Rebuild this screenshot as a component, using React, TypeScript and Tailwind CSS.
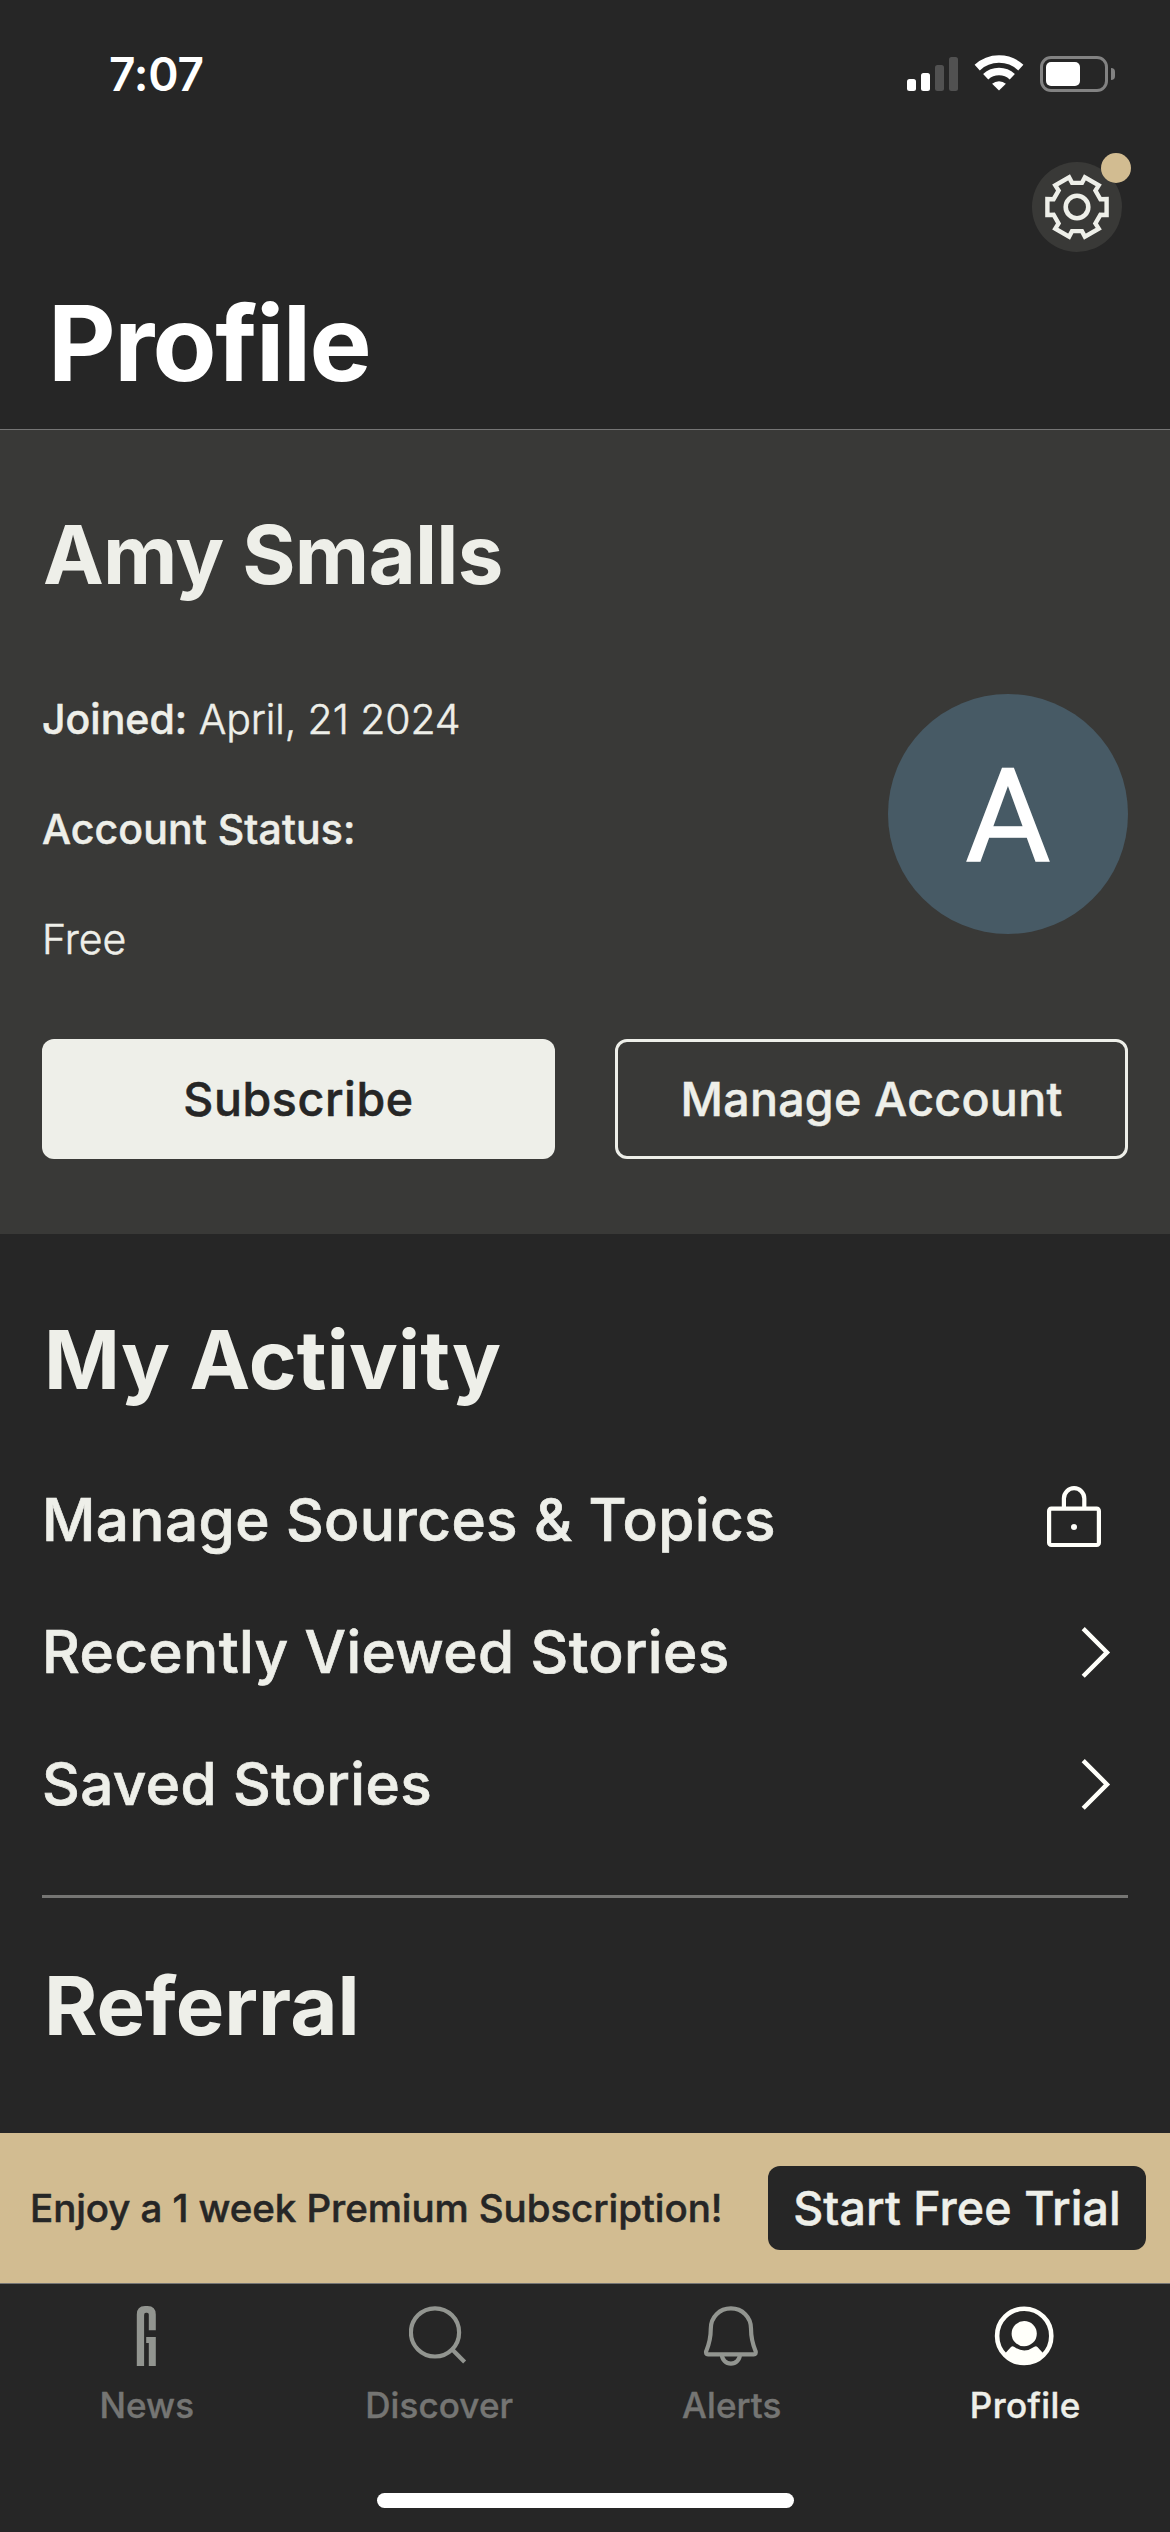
import React from "react";

function SignalBars() {
  return (
    <div className="flex h-[34px] items-end gap-[5px]">
      <div className="h-[12px] w-[9px] rounded-[2.5px] bg-white" />
      <div className="h-[18px] w-[9px] rounded-[2.5px] bg-white" />
      <div className="h-[26px] w-[9px] rounded-[2.5px] bg-[#515151]" />
      <div className="h-[34px] w-[9px] rounded-[2.5px] bg-[#515151]" />
    </div>
  );
}

function WifiIcon() {
  return (
    <svg width="48" height="36" viewBox="-24 -36 48 36" fill="none" className="-mt-[2px] overflow-visible">
      <path d="M-21.8 -23.4A32 32 0 0 1 21.8 -23.4" stroke="#fff" strokeWidth="7.6" />
      <path d="M-13.3 -14.3A19.5 19.5 0 0 1 13.3 -14.3" stroke="#fff" strokeWidth="7.6" />
      <path d="M0 -0.5L-6.9 -7.3A10.7 10.7 0 0 1 6.9 -7.3Z" fill="#fff" />
    </svg>
  );
}

function Battery() {
  return (
    <div className="flex items-center gap-[3px]">
      <div className="h-[36px] w-[68px] rounded-[11px] border-[3px] border-[#828282] p-[3px]">
        <div className="h-[24px] w-[34px] rounded-[5px] bg-white" />
      </div>
      <div className="h-[12px] w-[4px] rounded-r-full bg-[#828282]" />
    </div>
  );
}

const gearPoints = [0, 1, 2, 3, 4, 5]
  .flatMap((k) => {
    const a = (k * Math.PI) / 3;
    return [
      [29.6, -8],
      [29.6, 8],
      [23.4, 7.8],
      [18.4, 16.4],
    ].map(([x, y]) => `${(x * Math.cos(a) - y * Math.sin(a)).toFixed(2)},${(x * Math.sin(a) + y * Math.cos(a)).toFixed(2)}`);
  })
  .join(" ");

function GearIcon() {
  return (
    <svg width="66" height="66" viewBox="-33 -33 66 66" fill="none" stroke="#eeefe9">
      <polygon points={gearPoints} strokeWidth="4.4" />
      <circle r="11.3" strokeWidth="4.6" />
    </svg>
  );
}

function LockIcon() {
  return (
    <svg width="81" height="72" viewBox="0 0 81 72" fill="none" stroke="#fffffa" strokeWidth="4.2">
      <rect x="2.1" y="24.7" width="49.8" height="36.3" rx="2.2" />
      <path d="M16.9 24V14.4a10.2 10.2 0 0 1 20.4 0V24" />
      <circle cx="27" cy="43" r="3" fill="#fffffa" stroke="none" />
    </svg>
  );
}

function ChevronIcon() {
  return (
    <svg width="81" height="72" viewBox="0 0 81 72" fill="none" stroke="#fffffa" strokeWidth="4.4">
      <path d="M36.2 12.6L60 36.4L36.2 60.2" />
    </svg>
  );
}

function NewsIcon() {
  return (
    <svg width="60" height="60" viewBox="0 0 60 60" fill="#929590">
      <path d="M20.8 60V8.5Q20.8 0 29 0H31.6Q39.8 0 39.8 8.5V24.2H32.8V8.6Q32.8 6.8 31 6.8H30Q28.1 6.8 28.1 9V60Z" />
      <path d="M30.2 31H39.8V60H32.8V37H30.2Z" />
    </svg>
  );
}

function SearchIcon() {
  return (
    <svg width="60" height="60" viewBox="0 0 60 60" fill="none" stroke="#929590" strokeWidth="4.2">
      <circle cx="26" cy="26.4" r="24.1" />
      <path d="M43 43.2L55.6 56" />
    </svg>
  );
}

function BellIcon() {
  return (
    <svg width="60" height="60" viewBox="0 0 60 60" fill="none" stroke="#929590" strokeWidth="4.2">
      <path d="M29.9 2.4C18.5 2.4 9.8 11 9.8 22.5C9.8 33 8 38.5 5.2 45.2C4.4 47 5.3 48.4 7 48.4H52.8C54.5 48.4 55.4 47 54.6 45.2C51.8 38.5 50 33 50 22.5C50 11 41.3 2.4 29.9 2.4Z" />
      <path d="M20.9 48.6a9 9 0 0 0 18 0" />
    </svg>
  );
}

function ProfileIcon() {
  return (
    <svg width="60" height="60" viewBox="0 0 60 60" fill="#fffffa">
      <circle cx="30.2" cy="29.9" r="27.1" fill="none" stroke="#fffffa" strokeWidth="4.6" />
      <circle cx="30.2" cy="27.7" r="12.6" />
      <path d="M11 47.5L17 41Q18.4 39.5 20 40.8Q30.2 48.2 40.4 40.8Q42 39.5 43.4 41L49.4 47.5A26.5 26.5 0 0 1 11 47.5Z" />
    </svg>
  );
}

function ActivityRow({ label, icon }: { label: string; icon: React.ReactNode }) {
  return (
    <div className="flex h-[132px] items-center justify-between">
      <span className="text-[58.5px] font-medium tracking-[0.38px] whitespace-nowrap [-webkit-text-stroke:0.7px]">
        {label}
      </span>
      {icon}
    </div>
  );
}

function Tab({ label, icon, active = false }: { label: string; icon: React.ReactNode; active?: boolean }) {
  return (
    <div className="flex flex-1 flex-col items-center">
      {icon}
      <span
        className={
          active
            ? "mt-[18px] pl-[3px] text-[35px] leading-[42px] font-medium tracking-[0.4px] text-[#eeefe9] [-webkit-text-stroke:0.4px]"
            : "mt-[18px] pl-px text-[35px] leading-[42px] font-medium tracking-[0.1px] text-[#757573] [-webkit-text-stroke:0.4px]"
        }
      >
        {label}
      </span>
    </div>
  );
}

export default function App() {
  return (
    <div className="flex h-[2532px] w-[1170px] flex-col overflow-hidden bg-[#262626] font-['Inter',sans-serif] text-[#eeefe9]">
      <header className="flex h-[430px] shrink-0 flex-col border-b border-[#757575]">
        <div className="flex h-[148px] items-center justify-between pr-[55px] pl-[109px]">
          <span className="text-[46px] font-semibold tracking-[-0.2px] text-white">7:07</span>
          <div className="flex items-center gap-[17px]">
            <SignalBars />
            <WifiIcon />
            <Battery />
          </div>
        </div>
        <div className="mt-[14px] flex justify-end pr-12">
          <div className="relative flex h-[90px] w-[90px] items-center justify-center rounded-full bg-[#393937]">
            <GearIcon />
            <div className="absolute -top-[9px] -right-[9px] h-[30px] w-[30px] rounded-full bg-[#d2bc91]" />
          </div>
        </div>
        <h1 className="mt-[31px] pl-12 text-[104.5px] leading-[120px] font-bold tracking-[-1.55px] text-white">
          Profile
        </h1>
      </header>

      <section className="flex h-[804px] shrink-0 flex-col bg-[#393937] px-[42px] pt-[75px]">
        <h2 className="pl-px text-[81.5px] leading-[100px] font-bold tracking-[-0.75px]">Amy Smalls</h2>
        <div className="mt-[59px] flex justify-between">
          <div className="text-[41px] leading-[110px] font-light [-webkit-text-stroke:0.5px]">
            <p>
              <span className="font-medium">Joined:</span>
              <span className="tracking-[-0.1px]"> April, 21 2024</span>
            </p>
            <p className="font-medium tracking-[0.09px]">Account Status:</p>
            <p>Free</p>
          </div>
          <div className="mt-[30px] flex h-[240px] w-[240px] items-center justify-center rounded-full bg-[#475a65] pt-[5px] font-['Roboto',sans-serif] text-[130px] leading-none text-white [-webkit-text-stroke:1.6px]">
            A
          </div>
        </div>
        <div className="mt-[45px] grid grid-cols-2 gap-[60px]">
          <button className="h-[120px] rounded-xl bg-[#eeefe9] pt-[2px] text-[46.5px] font-medium tracking-[0.6px] text-[#262626] [-webkit-text-stroke:0.5px]">
            Subscribe
          </button>
          <button className="h-[120px] rounded-xl border-[3px] border-[#eeefe9] pt-[2px] text-[46.5px] font-medium tracking-[0.3px] [-webkit-text-stroke:0.5px]">
            Manage Account
          </button>
        </div>
      </section>

      <main className="flex min-h-0 flex-1 flex-col px-[42px] pt-[76px]">
        <h2 className="pl-[2px] text-[81.5px] leading-[100px] font-bold tracking-[0.15px]">My Activity</h2>
        <div className="mt-[44px]">
          <ActivityRow label="Manage Sources & Topics" icon={<LockIcon />} />
          <ActivityRow label="Recently Viewed Stories" icon={<ChevronIcon />} />
          <ActivityRow label="Saved Stories" icon={<ChevronIcon />} />
        </div>
        <div className="mt-[45px] h-[3px] shrink-0 bg-[#757573]" />
        <h2 className="mt-[58px] pl-[2px] text-[81.5px] leading-[100px] font-bold">Referral</h2>
      </main>

      <div className="flex h-[150px] shrink-0 items-center justify-between bg-[#d2bc91] pr-6 pl-[30px]">
        <span className="pt-[2px] text-[38.5px] font-medium tracking-[-0.08px] whitespace-nowrap text-[#262626] [-webkit-text-stroke:0.5px]">
          Enjoy a 1 week Premium Subscription!
        </span>
        <button className="h-[84px] w-[378px] rounded-xl bg-[#262626] pt-px text-[46.5px] font-medium tracking-[0.1px] whitespace-nowrap [-webkit-text-stroke:0.5px]">
          Start Free Trial
        </button>
      </div>

      <nav className="flex h-[249px] shrink-0 flex-col items-center border-t border-[#757575]">
        <div className="flex h-[209px] w-full pt-[22px]">
          <Tab label="News" icon={<NewsIcon />} />
          <Tab label="Discover" icon={<SearchIcon />} />
          <Tab label="Alerts" icon={<BellIcon />} />
          <Tab label="Profile" icon={<ProfileIcon />} active />
        </div>
        <div className="h-[15px] w-[417px] rounded-full bg-white" />
      </nav>
    </div>
  );
}
